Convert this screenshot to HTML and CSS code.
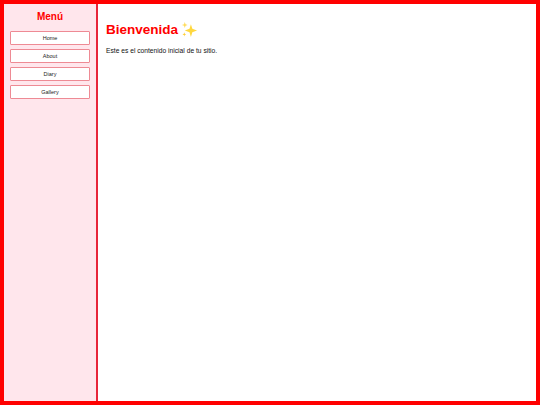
FILE: index.html
```html
<!DOCTYPE html>
<html lang="es">
<head>
<meta charset="utf-8">
<title>Bienvenida</title>
<link rel="stylesheet" href="styles.css">
</head>
<body>
<div class="frame">
  <aside class="sidebar">
    <h2 class="menu-title">Menú</h2>
    <nav class="menu">
      <button class="menu-btn">Home</button>
      <button class="menu-btn">About</button>
      <button class="menu-btn">Diary</button>
      <button class="menu-btn">Gallery</button>
    </nav>
  </aside>
  <main class="content">
    <h1 class="title">Bienvenida
      <svg class="sparkles" viewBox="0 0 18 18" aria-hidden="true">
        <path fill="#ffd83f" d="M10.5 3.5 L12 8.2 L17 10 L12 11.8 L10.5 17 L9 11.8 L4 10 L9 8.2 Z"/>
        <path fill="#ffdc5a" d="M4 1 L4.8 3.4 L7 4.2 L4.8 5 L4 7.4 L3.2 5 L1 4.2 L3.2 3.4 Z"/>
        <path fill="#ffcf3a" d="M3.5 12 L4 13.6 L5.5 14.2 L4 14.8 L3.5 16.4 L3 14.8 L1.5 14.2 L3 13.6 Z"/>
      </svg>
    </h1>
    <p class="intro">Este es el contenido inicial de tu sitio.</p>
  </main>
</div>
</body>
</html>
```
FILE: styles.css
```css
* { box-sizing: border-box; }
html, body { margin: 0; height: 100%; }
body {
  font-family: "Liberation Sans", Arial, sans-serif;
  background: #fff;
  color: #000;
}
.frame {
  display: flex;
  width: 540px;
  height: 405px;
  border: 4px solid #ff0000;
  overflow: hidden;
}
.sidebar {
  flex: 0 0 94px;
  background: #ffe6ec;
  border-right: 2px solid #e8253a;
  padding: 6px 6px 0;
}
.menu-title {
  margin: 0 0 8px;
  font-size: 10px;
  line-height: 13px;
  font-weight: 700;
  color: #ff0000;
  text-align: center;
}
.menu {
  display: flex;
  flex-direction: column;
  gap: 4px;
}
.menu-btn {
  height: 14px;
  width: 80px;
  padding: 0;
  background: #fff;
  border: 1px solid #ee8a94;
  border-radius: 1px;
  font-family: inherit;
  font-size: 5.5px;
  color: #222;
  text-align: center;
}
.content {
  flex: 1;
  padding: 17px 8px 0;
}
.title {
  display: flex;
  align-items: center;
  gap: 3px;
  margin: 0;
  height: 17px;
  font-size: 13.5px;
  font-weight: 700;
  color: #ff0000;
}
.sparkles {
  width: 17px;
  height: 17px;
}
.intro {
  margin: 8px 0 0;
  font-size: 6.7px;
  line-height: 9px;
  color: #111;
}
```
